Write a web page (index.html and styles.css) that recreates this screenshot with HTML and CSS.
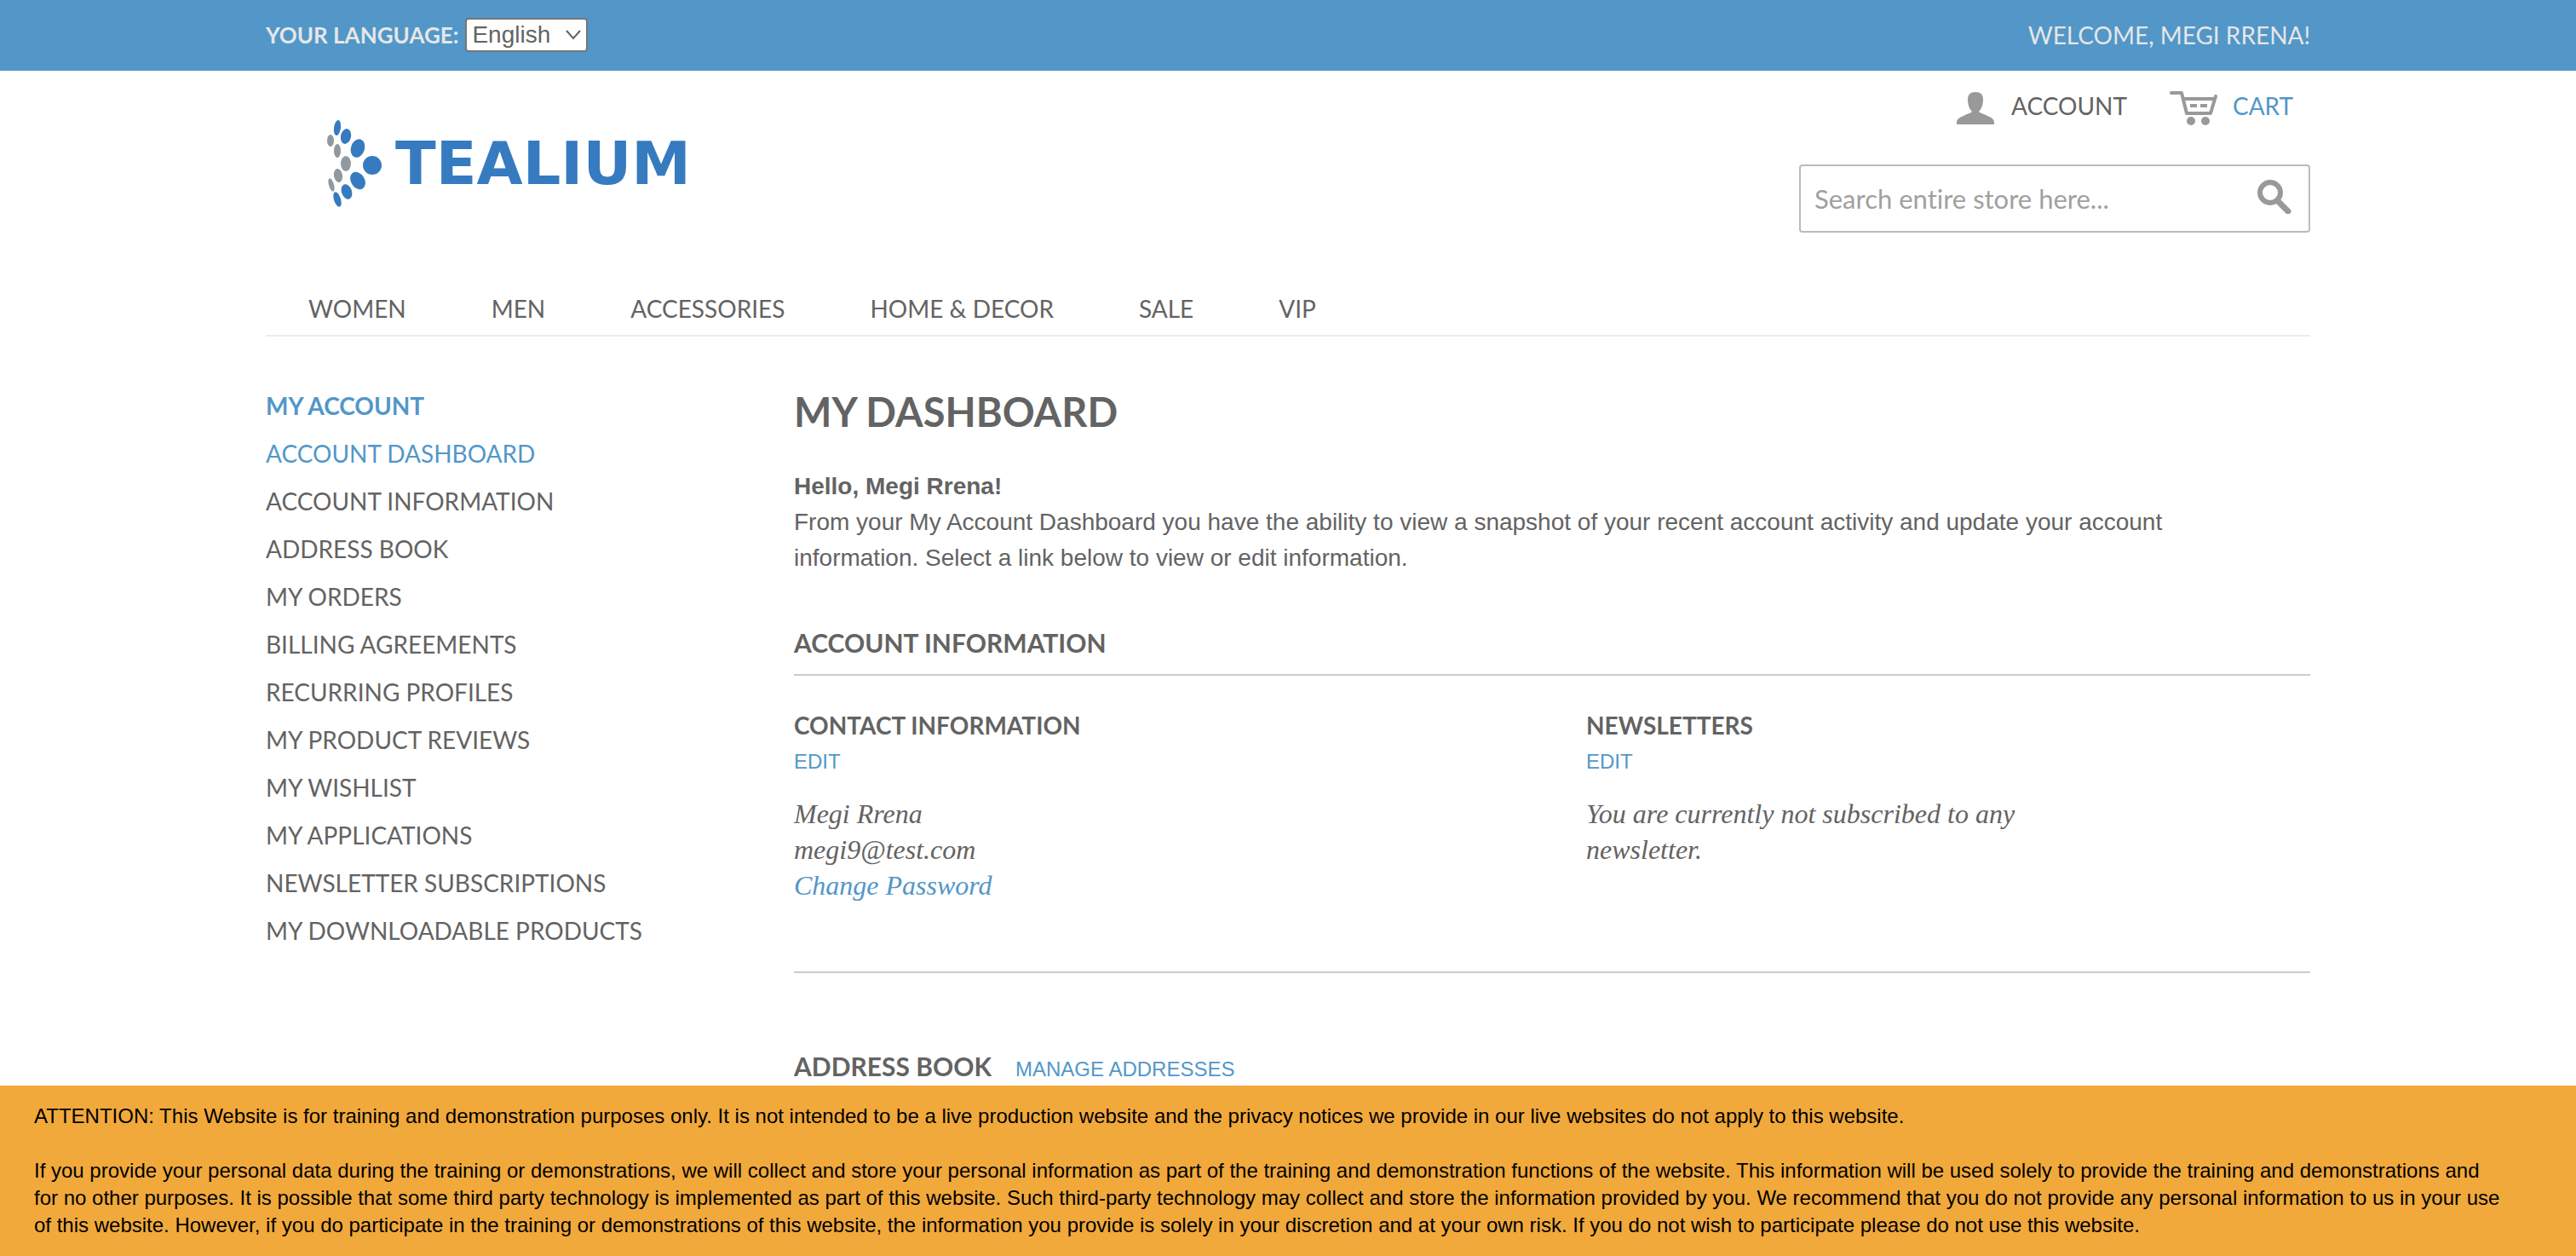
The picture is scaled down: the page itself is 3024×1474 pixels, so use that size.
FILE: index.html
```html
<!DOCTYPE html>
<html lang="en">
<head>
<meta charset="utf-8">
<meta name="viewport" content="width=device-width, initial-scale=1">
<title>My Account</title>
<link rel="stylesheet" href="styles.css">
</head>
<body>
<div class="topbar">
  <div class="container topbar-inner">
    <div class="language">
      <label for="language">Your Language:</label>
      <select id="language" class="language-select"><option>English</option></select>
    </div>
    <p class="welcome">Welcome, Megi Rrena!</p>
  </div>
</div>

<header class="container header">
  <div class="header-main">
    <a class="logo" href="#" aria-label="Tealium">
      <svg class="logo-mark" viewBox="0 0 64 104" aria-hidden="true">
        <g fill="#367bbf">
          <ellipse cx="12" cy="10" rx="4" ry="9" transform="rotate(8 12 10)"/>
          <ellipse cx="22" cy="20" rx="6" ry="9" transform="rotate(12 22 20)"/>
          <ellipse cx="36" cy="34" rx="8" ry="11" transform="rotate(18 36 34)"/>
          <ellipse cx="53" cy="54" rx="11" ry="11"/>
          <ellipse cx="36" cy="72" rx="8" ry="11" transform="rotate(-32 36 72)"/>
          <ellipse cx="23" cy="85" rx="6" ry="9" transform="rotate(-20 23 85)"/>
          <ellipse cx="12" cy="94" rx="4" ry="9" transform="rotate(-18 12 94)"/>
        </g>
        <g fill="#92999e">
          <ellipse cx="4" cy="25" rx="4" ry="7"/>
          <ellipse cx="12" cy="37" rx="4" ry="8"/>
          <ellipse cx="22" cy="52" rx="6" ry="9"/>
          <ellipse cx="13" cy="66" rx="5" ry="8" transform="rotate(-10 13 66)"/>
          <ellipse cx="5" cy="77" rx="3" ry="8" transform="rotate(-16 5 77)"/>
        </g>
      </svg>
      <span class="logo-name">TEALIUM</span>
    </a>
    <div class="header-tools">
      <nav class="quick-links" aria-label="Quick links">
        <a class="quick-link" href="#">
          <svg class="icon-user" viewBox="0 0 44 38" fill="#999" aria-hidden="true"><path d="M22 0c6 0 9 3 9 9 0 6-2 11-5 14 2 2 5 2 10 5 5 2 8 4 8 8v2H0v-2c0-4 3-6 8-8 5-3 8-3 10-5-3-3-5-8-5-14 0-6 3-9 9-9z"/></svg>
          Account
        </a>
        <a class="quick-link quick-link-cart" href="#">
          <svg class="icon-cart" viewBox="0 0 56 40" fill="none" stroke="#999" stroke-width="4" stroke-linecap="round" stroke-linejoin="round" aria-hidden="true"><path d="M2 2h12l6 24h28l6-20M16 9h36"/><path stroke-linecap="butt" d="M24 17h8M36 17h8"/><g fill="#999" stroke="none"><circle cx="25" cy="35" r="5"/><circle cx="42" cy="35" r="5"/></g></svg>
          Cart
        </a>
      </nav>
      <form class="search">
        <input class="search-input" type="search" aria-label="Search" placeholder="Search entire store here...">
        <button class="search-button" type="button" aria-label="Search">
          <svg class="icon-search" viewBox="0 0 40 40" fill="none" stroke="#999" aria-hidden="true"><circle cx="15" cy="15" r="12" stroke-width="6"/><path d="M24 25l12 12" stroke-width="7" stroke-linecap="round"/></svg>
        </button>
      </form>
    </div>
  </div>
  <nav class="main-nav" aria-label="Main">
    <a href="#">Women</a>
    <a href="#">Men</a>
    <a href="#">Accessories</a>
    <a href="#">Home &amp; Decor</a>
    <a href="#">Sale</a>
    <a href="#">VIP</a>
  </nav>
</header>

<div class="container page">
  <aside class="sidebar">
    <h2 class="sidebar-title">My Account</h2>
    <ul class="sidebar-list">
      <li><a class="current" href="#">Account Dashboard</a></li>
      <li><a href="#">Account Information</a></li>
      <li><a href="#">Address Book</a></li>
      <li><a href="#">My Orders</a></li>
      <li><a href="#">Billing Agreements</a></li>
      <li><a href="#">Recurring Profiles</a></li>
      <li><a href="#">My Product Reviews</a></li>
      <li><a href="#">My Wishlist</a></li>
      <li><a href="#">My Applications</a></li>
      <li><a href="#">Newsletter Subscriptions</a></li>
      <li><a href="#">My Downloadable Products</a></li>
    </ul>
  </aside>

  <main class="content">
    <h1 class="page-title">My Dashboard</h1>
    <div class="intro">
      <p><strong>Hello, Megi Rrena!</strong></p>
      <p>From your My Account Dashboard you have the ability to view a snapshot of your recent account activity and update your account information. Select a link below to view or edit information.</p>
    </div>
    <section class="account-info">
      <h2 class="section-title">Account Information</h2>
      <div class="boxes">
        <div class="box">
          <h3 class="box-title">Contact Information</h3>
          <a class="action" href="#">Edit</a>
          <p class="box-text">Megi Rrena<br>megi9@test.com<br><a href="#">Change Password</a></p>
        </div>
        <div class="box">
          <h3 class="box-title">Newsletters</h3>
          <a class="action" href="#">Edit</a>
          <p class="box-text">You are currently not subscribed to any newsletter.</p>
        </div>
      </div>
    </section>
    <section class="address-book">
      <h2 class="address-title">Address Book</h2>
      <a class="action" href="#">Manage Addresses</a>
    </section>
  </main>
</div>

<div class="notice" role="note">
  <p>ATTENTION: This Website is for training and demonstration purposes only. It is not intended to be a live production website and the privacy notices we provide in our live websites do not apply to this website.</p>
  <p>If you provide your personal data during the training or demonstrations, we will collect and store your personal information as part of the training and demonstration functions of the website. This information will be used solely to provide the training and demonstrations and<br>for no other purposes. It is possible that some third party technology is implemented as part of this website. Such third-party technology may collect and store the information provided by you. We recommend that you do not provide any personal information to us in your use<br>of this website. However, if you do participate in the training or demonstrations of this website, the information you provide is solely in your discretion and at your own risk. If you do not wish to participate please do not use this website.</p>
</div>
</body>
</html>
```
FILE: styles.css
```css
:root {
  --text: #636363;
  --link: #5297c8;
  --line: #cccccc;
  --display: Lato, "Liberation Sans", sans-serif;
  --body: "Liberation Sans", Arial, sans-serif;
}

* {
  box-sizing: border-box;
}

body {
  margin: 0;
  background: #fff;
  color: var(--text);
  font: 28px/42px var(--body);
}

h1, h2, h3, p, ul {
  margin: 0;
  padding: 0;
}

ul {
  list-style: none;
}

a {
  color: var(--link);
  text-decoration: none;
}

.container {
  max-width: 2480px;
  margin: 0 auto;
  padding: 0 40px;
}

/* Top bar */
.topbar {
  background: #5297c8;
  color: #e6e6e6;
  font-family: var(--display);
  text-transform: uppercase;
}

.topbar-inner {
  display: flex;
  justify-content: space-between;
  align-items: center;
  min-height: 83px;
  padding-bottom: 2px;
}

.language {
  display: flex;
  align-items: center;
  gap: 8px;
  font-size: 26px;
  font-weight: 700;
}

.language-select {
  width: 144px;
  height: 40px;
  padding: 0 6px;
  appearance: none;
  border: 2px solid #767676;
  border-radius: 4px;
  background: #fff url("data:image/svg+xml,%3Csvg xmlns='http://www.w3.org/2000/svg' width='18' height='12' fill='none' stroke='%23636363' stroke-width='2'%3E%3Cpath d='M1 1l8 9 8-9'/%3E%3C/svg%3E") no-repeat right 6px center;
  color: var(--text);
  font: 28px var(--body);
}

/* Header */
.header-main {
  display: flex;
  justify-content: space-between;
  min-height: 248px;
}

.logo {
  display: flex;
  align-items: center;
  gap: 16px;
  height: 104px;
  margin: 57px 0 0 72px;
  color: #367bbf;
}

.logo-mark {
  width: 64px;
  height: 104px;
}

.logo-name {
  font: 700 70px/104px "DejaVu Sans", sans-serif;
}

.header-tools {
  width: 600px;
}

.quick-links {
  display: flex;
  justify-content: flex-end;
  gap: 50px;
  padding: 18px 20px 0 0;
  font-family: var(--display);
  text-transform: uppercase;
}

.quick-link {
  display: flex;
  align-items: center;
  gap: 20px;
  color: var(--text);
}

.quick-link-cart {
  gap: 18px;
  color: var(--link);
}

.icon-user {
  width: 44px;
  height: 38px;
  margin-top: 6px;
}

.icon-cart {
  width: 56px;
  height: 40px;
  margin-top: 6px;
}

.search {
  display: flex;
  height: 80px;
  margin-top: 46px;
  border: 2px solid #bbb;
  border-radius: 4px;
}

.search-input {
  flex: 1;
  min-width: 0;
  padding: 0 16px;
  border: 0;
  outline: 0;
  background: transparent;
  font: 31px var(--display);
  font-variant-ligatures: none;
}

.search-input::placeholder {
  color: #a0a0a0;
}

.search-button {
  display: flex;
  align-items: center;
  width: 60px;
  padding: 0 0 4px;
  border: 0;
  background: transparent;
}

.icon-search {
  width: 40px;
  height: 40px;
}

.main-nav {
  display: flex;
  gap: 100px;
  padding: 10px 50px;
  border-bottom: 2px solid #ededed;
  font-family: var(--display);
  text-transform: uppercase;
}

.main-nav a {
  color: var(--text);
}

/* Page */
.page {
  display: grid;
  grid-template-columns: 540px 1fr;
  gap: 80px;
  padding-top: 53px;
}

.sidebar {
  font-family: var(--display);
  line-height: 56px;
  text-transform: uppercase;
}

.sidebar-title {
  color: var(--link);
  font-size: 28px;
  font-weight: 700;
}

.sidebar-list a {
  color: var(--text);
}

.sidebar-list .current {
  color: var(--link);
}

.page-title,
.section-title,
.box-title,
.address-title {
  font-family: var(--display);
  font-weight: 700;
  text-transform: uppercase;
}

.page-title {
  font-size: 47px;
  line-height: 70px;
}

.intro {
  max-width: 1700px;
  margin-top: 32px;
}

.account-info {
  margin-top: 57px;
  padding-bottom: 80px;
  border-bottom: 2px solid var(--line);
}

.section-title {
  padding-bottom: 16px;
  border-bottom: 2px solid var(--line);
  font-size: 30px;
}

.boxes {
  display: grid;
  grid-template-columns: 1fr 1fr;
  gap: 80px;
  padding-top: 37px;
}

.box-title {
  font-size: 28px;
}

.action {
  display: block;
  font-size: 24px;
  line-height: 44px;
  text-transform: uppercase;
}

.box-text {
  max-width: 560px;
  margin-top: 18px;
  font: italic 32px/42px "Liberation Serif", serif;
}

.address-book {
  display: flex;
  align-items: baseline;
  gap: 28px;
  margin-top: 88px;
}

.address-title {
  font-size: 30px;
}

/* Training notice, pinned over the page */
.notice {
  position: fixed;
  right: 0;
  bottom: 0;
  left: 0;
  display: grid;
  gap: 32px;
  padding: 20px 40px;
  background: #f1a93b;
  color: #000;
  font-size: 24px;
  line-height: 32px;
}
```
